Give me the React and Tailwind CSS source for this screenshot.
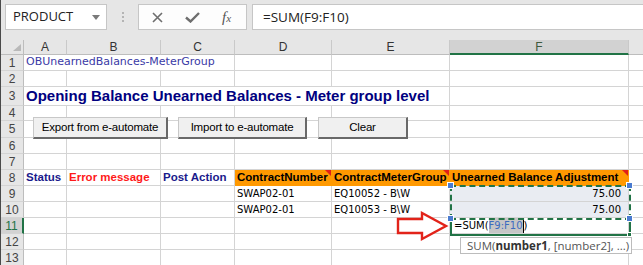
import React from 'react';

const W = {
  A: 'w-[43px]',
  B: 'w-[94px]',
  C: 'w-[74px]',
  D: 'w-[97px]',
  E: 'w-[118px]',
  F: 'w-[179px]',
  G: 'w-[40px]',
};

function Cell({ w, line = 'border-[#d4d4d4]', className = '', children }) {
  return (
    <div className={`${w} ${line} ${className} relative shrink-0 h-full border-b border-r flex items-center overflow-hidden whitespace-nowrap`}>
      {children}
    </div>
  );
}

function Row({ n, h, active, children }) {
  return (
    <div className={`${h} flex shrink-0`}>
      <div
        className={`w-[23px] shrink-0 h-full flex items-center justify-center border-b border-[#d4d4d4] font-['Liberation_Sans',sans-serif] text-[12px] ${
          active ? 'bg-[#d2d2d2] text-[#217346] border-r-2 border-r-[#217346]' : 'bg-[#e6e6e6] text-[#444] border-r border-r-[#bdbdbd]'
        }`}
      >
        {n}
      </div>
      {children}
    </div>
  );
}

function Empty({ from = 'A', to = 'G' }) {
  const keys = ['A', 'B', 'C', 'D', 'E', 'F', 'G'];
  return keys.slice(keys.indexOf(from), keys.indexOf(to) + 1).map((k) => <Cell key={k} w={W[k]} />);
}

function Note() {
  return (
    <svg className="absolute top-0 right-0" width="6" height="6">
      <path d="M0 0h6v6z" fill="#e0201a" />
    </svg>
  );
}

function Handle({ className }) {
  return <div className={`${className} absolute w-[7px] h-[7px] bg-[#4a7bd0] border border-white`} />;
}

function FormButton({ className, children }) {
  return (
    <div className={`${className} absolute top-[117px] h-[22px] bg-[#f0f0f0] border border-[#c8c8c8] border-r-2 border-b-2 border-r-[#696969] border-b-[#696969] flex items-center justify-center font-['Liberation_Sans',sans-serif] text-[11.5px] tracking-[-0.2px]`}>
      {children}
    </div>
  );
}

export default function App() {
  return (
    <div className="relative w-[643px] h-[265px] overflow-hidden bg-white border-l border-[#4a4a4a] font-['DejaVu_Sans',sans-serif] text-[10px] text-black flex flex-col">
      {/* formula bar */}
      <div className="h-[40px] shrink-0 bg-[#e6e6e6] flex items-start pt-[4px] pl-[4px] font-['Open_Sans',sans-serif]">
        <div className="w-[102px] h-[26px] bg-white border border-[#c6c6c6] flex items-center justify-between pl-[7px] pr-[6px]">
          <span className="text-[13px] text-[#222]">PRODUCT</span>
          <svg width="8" height="5">
            <path d="M0 0h8L4 5z" fill="#7a7a7a" />
          </svg>
        </div>
        <div className="w-[31px] h-[26px] flex flex-col items-center justify-center gap-[2px]">
          <div className="w-[2px] h-[2px] bg-[#b4b4b4]" />
          <div className="w-[2px] h-[2px] bg-[#b4b4b4]" />
          <div className="w-[2px] h-[2px] bg-[#b4b4b4]" />
        </div>
        <div className="w-[109px] h-[26px] bg-[#fdfdfd] border border-[#c6c6c6] flex items-center">
          <svg className="ml-[13px]" width="11" height="11" viewBox="0 0 11 11">
            <path d="M1 1l9 9M10 1l-9 9" stroke="#6e6e6e" strokeWidth="1.6" />
          </svg>
          <svg className="ml-[22px]" width="15" height="11" viewBox="0 0 15 11">
            <path d="M1 5.5l4.5 4L14 1" stroke="#6e6e6e" strokeWidth="2.4" fill="none" />
          </svg>
          <span className="ml-[22px] font-['Liberation_Serif',serif] italic text-[15px] text-[#555] leading-none">
            f<span className="text-[11px]">x</span>
          </span>
        </div>
        <div className="ml-[5px] flex-1 h-[26px] bg-white border border-r-0 border-[#c6c6c6] flex items-center pl-[10px] text-[13.5px] text-[#222]">
          =SUM(F9:F10)
        </div>
      </div>

      {/* column headers */}
      <div className="h-[15px] flex shrink-0 bg-[#e6e6e6] font-['Liberation_Sans',sans-serif] text-[12px] text-[#333]">
        <div className="w-[23px] shrink-0 h-full border-b border-r border-[#bdbdbd] relative">
          <svg className="absolute right-[2px] bottom-[3px]" width="8" height="7">
            <path d="M8 0v7H0z" fill="#b9b9b9" />
          </svg>
        </div>
        {['A', 'B', 'C', 'D', 'E'].map((k) => (
          <div key={k} className={`${W[k]} shrink-0 h-full border-b border-b-[#bdbdbd] border-r border-r-[#c9c9c9] flex items-center justify-center`}>
            {k}
          </div>
        ))}
        <div className={`${W.F} shrink-0 h-full border-b-2 border-b-[#217346] border-r border-r-[#c9c9c9] bg-[#d2d2d2] text-[#3d5a3d] flex items-center justify-center`}>
          F
        </div>
        <div className={`${W.G} shrink-0 h-full border-b border-b-[#bdbdbd]`} />
      </div>

      <Row n="1" h="h-[16px]">
        <Cell w="w-[211px]" className="pl-[2px] text-[11px] text-[#3a3aa6]">OBUnearnedBalances-MeterGroup</Cell>
        <Empty from="D" />
      </Row>
      <Row n="2" h="h-[16px]">
        <Empty />
      </Row>
      <Row n="3" h="h-[19px]">
        <Cell w="w-[426px]" className="pl-[2px] pt-[1px] font-['Liberation_Sans',sans-serif] font-bold text-[15px] text-[#000080]">
          Opening Balance Unearned Balances - Meter group level
        </Cell>
        <Empty from="F" />
      </Row>
      <Row n="4" h="h-[15px]">
        <Empty />
      </Row>
      <Row n="5" h="h-[17px]">
        <Empty />
      </Row>
      <Row n="6" h="h-[16px]">
        <Empty />
      </Row>
      <Row n="7" h="h-[16px]">
        <Empty />
      </Row>
      <Row n="8" h="h-[16px]">
        <div className="contents font-['Liberation_Sans',sans-serif] font-bold text-[11.5px]">
          <Cell w={W.A} className="pl-[2px] text-[#1a1a8c]">Status</Cell>
          <Cell w={W.B} className="pl-[2px] text-[#ff1a1a]">Error message</Cell>
          <Cell w={W.C} className="pl-[2px] text-[#1a1a8c]">Post Action</Cell>
          <Cell w={W.D} line="border-[#ff9900]" className="pl-[2px] bg-[#ff9900]">
            ContractNumber
            <Note />
          </Cell>
          <Cell w={W.E} line="border-[#ff9900]" className="pl-[2px] bg-[#ff9900]">
            ContractMeterGroup
            <Note />
          </Cell>
          <Cell w={W.F} line="border-[#ff9900]" className="pl-[2px] bg-[#ff9900]">
            Unearned Balance Adjustment
            <Note />
          </Cell>
          <Cell w={W.G} />
        </div>
      </Row>
      <Row n="9" h="h-[16px]">
        <Empty to="C" />
        <Cell w={W.D} className="pl-[2px]">SWAP02-01</Cell>
        <Cell w={W.E} className="pl-[2px]">EQ10052 - B\W</Cell>
        <Cell w={W.F} className="justify-end pr-[7px] bg-[#e9ecf2]">75.00</Cell>
        <Cell w={W.G} />
      </Row>
      <Row n="10" h="h-[16px]">
        <Empty to="C" />
        <Cell w={W.D} className="pl-[2px]">SWAP02-01</Cell>
        <Cell w={W.E} className="pl-[2px]">EQ10053 - B\W</Cell>
        <Cell w={W.F} className="justify-end pr-[7px] bg-[#e9ecf2]">75.00</Cell>
        <Cell w={W.G} />
      </Row>
      <Row n="11" h="h-[16px]" active>
        <Empty to="E" />
        <Cell w={W.F} className="pl-[4px]">
          =SUM(<span className="bg-[#c6c6c6] text-[#3c6cc0] border-r border-black">F9:F10</span>)
        </Cell>
        <Cell w={W.G} />
      </Row>
      <Row n="12" h="h-[16px]">
        <Empty />
      </Row>
      <Row n="13" h="h-[16px]">
        <Empty />
      </Row>

      {/* reference marquee + active cell */}
      <div className="absolute left-[449px] top-[185px] w-[181px] h-[35px] border-2 border-dashed border-[#217346]" />
      <div className="absolute left-[449px] top-[219px] w-[181px] h-[17px] border-2 border-t-0 border-[#217346]" />
      <div className="absolute left-[626px] top-[232px] w-[5px] h-[5px] bg-[#217346] border border-white" />
      <Handle className="left-[446px] top-[182px]" />
      <Handle className="left-[625px] top-[182px]" />
      <Handle className="left-[446px] top-[215px]" />
      <Handle className="left-[625px] top-[215px]" />

      {/* form buttons floating over the sheet */}
      <FormButton className="left-[32px] w-[135px]">Export from e-automate</FormButton>
      <FormButton className="left-[177px] w-[129px]">Import to e-automate</FormButton>
      <FormButton className="left-[317px] w-[90px]">Clear</FormButton>

      {/* red arrow annotation */}
      <svg className="absolute left-[394px] top-[211px]" width="54" height="30" viewBox="0 0 54 30">
        <path d="M3 8h24V2l24 13-24 13v-6H3z" fill="white" stroke="#e2231a" strokeWidth="2.4" strokeLinejoin="miter" />
      </svg>

      {/* function tooltip */}
      <div className="absolute left-[459px] top-[237px] w-[172px] h-[17px] bg-white border border-[#bcbcbc] flex items-center pl-[6px] font-['Open_Sans',sans-serif] text-[11.5px] text-[#555]">
        SUM(<b className="text-[#333]">number1</b>, [number2], ...)
      </div>
    </div>
  );
}
